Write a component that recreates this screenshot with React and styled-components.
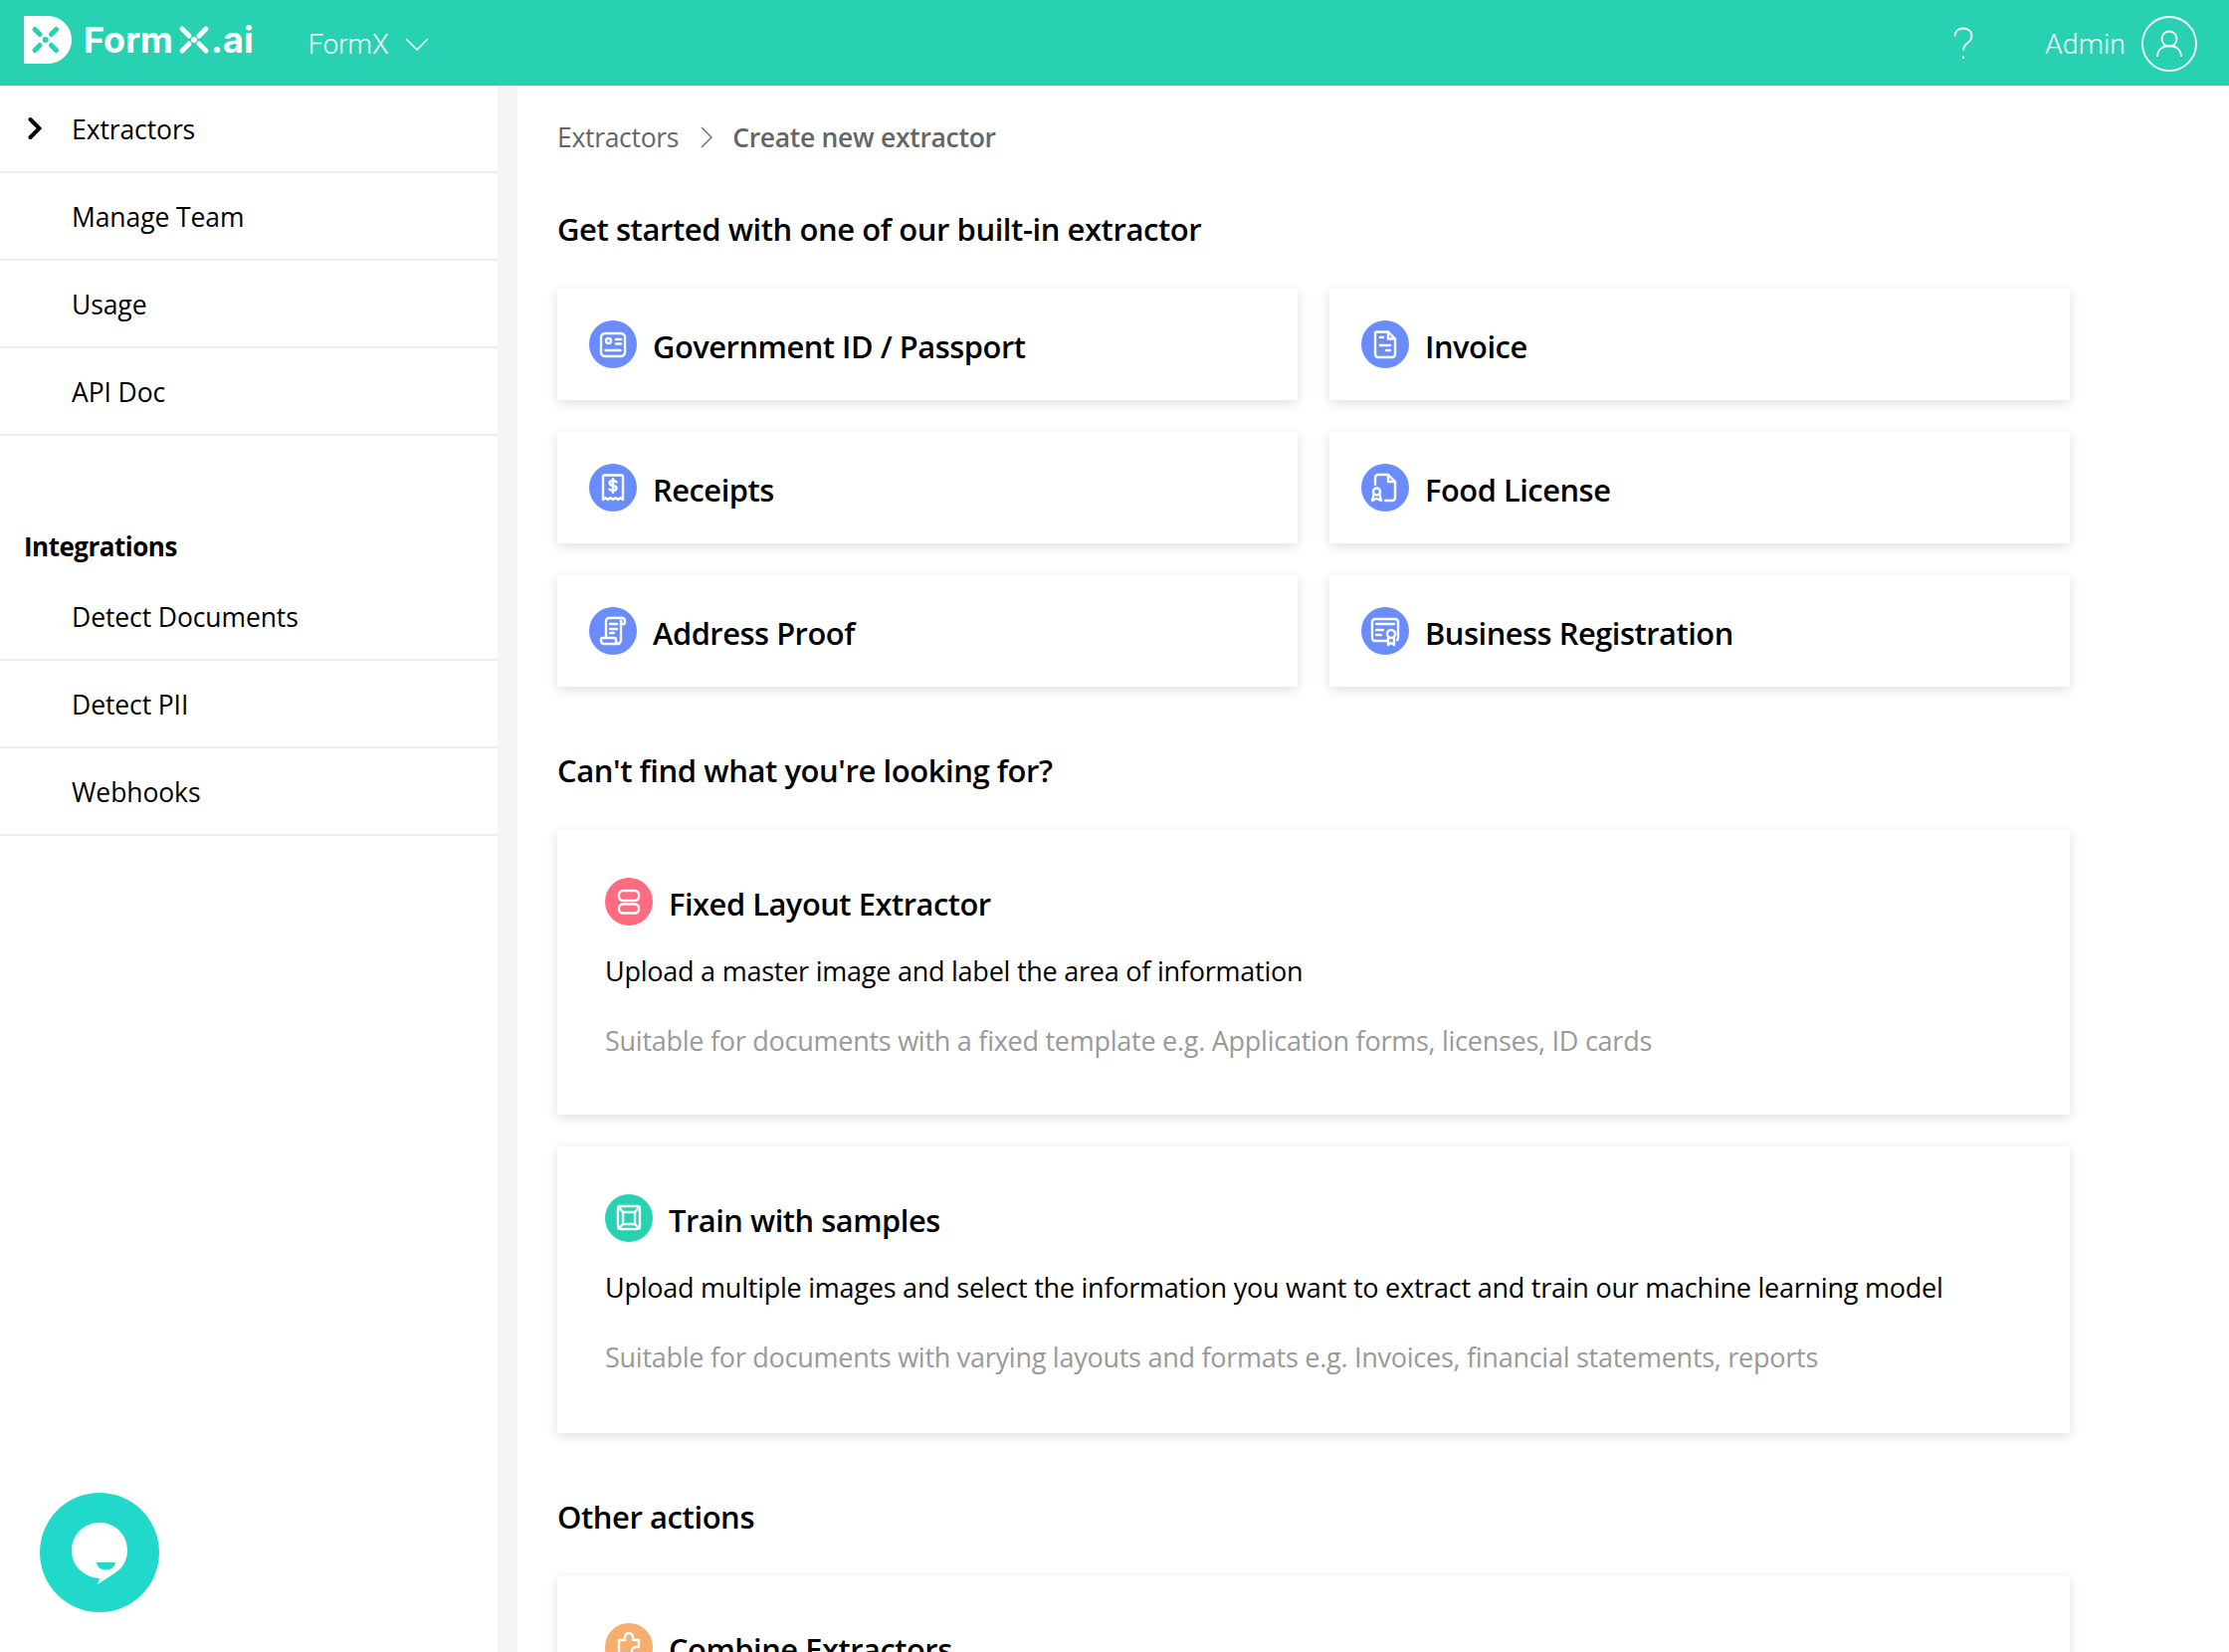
import styled, { createGlobalStyle } from "styled-components";

const GlobalStyle = createGlobalStyle`
    html, body {
        margin: 0;
        padding: 0;
        background: #fff;
    }
    body {
        font-family: "Open Sans", "Noto Sans", sans-serif;
        color: #000;
    }
    * { box-sizing: border-box; }
`

const Page = styled.div`
    width: 2240px;
    height: 1660px;
    overflow: hidden;
    position: relative;
    display: flex;
    flex-direction: column;
`

const Header = styled.header`
    height: 86px;
    flex: none;
    background: #27d1b1;
    display: flex;
    align-items: center;
    color: #fff;
    padding-left: 24px;
`

const LogoMark = styled.svg`
    width: 48px;
    height: 48px;
    flex: none;
    margin-top: -6px;
`

const LogoText = styled.div`
    display: flex;
    align-items: center;
    margin-left: 12px;
    margin-top: -6px;
    font-family: Inter, sans-serif;
    font-weight: 700;
    font-size: 36px;
    line-height: 48px;
    svg { margin: 0 1px 0 5px; }
`

const OrgSwitch = styled.div`
    display: flex;
    align-items: center;
    margin-left: 55px;
    margin-top: 3px;
    gap: 16px;
    font-family: Roboto, sans-serif;
    font-weight: 300;
    font-size: 27.5px;
    line-height: 36px;
`

const HeaderRight = styled.div`
    margin-left: auto;
    display: flex;
    align-items: center;
    padding: 2px 32px 0 0;
`

const HelpMark = styled.svg`
    margin-right: 72px;
`

const AdminName = styled.span`
    font-family: Roboto, sans-serif;
    font-weight: 300;
    font-size: 28.5px;
    line-height: 36px;
    margin: 2px 16px 0 0;
`

const Body = styled.div`
    flex: 1;
    display: flex;
    min-height: 0;
`

const Sidebar = styled.aside`
    width: 520px;
    flex: none;
    background: #fff;
    border-right: 20px solid #f5f5f5;
`

const NavRow = styled.div`
    height: 88px;
    display: flex;
    align-items: center;
    position: relative;
    padding: 2px 0 0 72px;
    border-bottom: 2px solid #eee;
    font-size: 26.5px;
    font-weight: 400;
    letter-spacing: -0.1px;
    svg {
        position: absolute;
        left: 28px;
        top: 31px;
    }
`

const NavSection = styled.div`
    margin-top: 93px;
    height: 45px;
    padding-left: 24px;
    font-size: 26px;
    line-height: 36px;
    font-weight: 700;
    letter-spacing: -0.5px;
`

const Main = styled.main`
    flex: 1;
    padding: 0 160px 0 40px;
    min-width: 0;
`

const Breadcrumb = styled.div`
    display: flex;
    align-items: center;
    height: 40px;
    margin-top: 32px;
    font-size: 26.5px;
    color: #666;
    letter-spacing: -0.3px;
    svg { margin: 0 19px 0 21px; }
    b {
        font-weight: 600;
        color: #666;
    }
`

const Heading = styled.h2`
    margin: ${(p) => p.$top}px 0 0;
    font-size: 31px;
    line-height: 44px;
    font-weight: 600;
    letter-spacing: -0.43px;
    color: #000;
`

const Grid = styled.div`
    display: grid;
    grid-template-columns: 744px 744px;
    gap: 32px;
    margin-top: 38px;
`

const Card = styled.div`
    height: 112px;
    background: #fff;
    box-shadow: 0 3px 10px rgba(0, 0, 0, 0.13);
    padding: 32px;
    display: flex;
    align-items: flex-start;
`

const Round = styled.span`
    width: 48px;
    height: 48px;
    flex: none;
    border-radius: 50%;
    background: ${(p) => p.$color};
    svg {
        display: block;
        width: 48px;
        height: 48px;
        fill: none;
        stroke: #fff;
        stroke-width: 2.4;
        stroke-linecap: round;
        stroke-linejoin: round;
    }
`

const CardName = styled.span`
    margin-left: 16px;
    margin-top: 1px;
    font-size: 30.8px;
    line-height: 50px;
    font-weight: 600;
    letter-spacing: -0.45px;
    color: #000;
`

const WideCard = styled.div`
    height: ${(p) => p.$height}px;
    margin-top: ${(p) => p.$top}px;
    background: #fff;
    box-shadow: 0 3px 10px rgba(0, 0, 0, 0.13);
    padding: 48px;
`

const WideHead = styled.div`
    display: flex;
    align-items: flex-start;
`

const Desc = styled.p`
    margin: 23px 0 0;
    font-size: 27px;
    line-height: 40px;
    letter-spacing: -0.24px;
    color: #000;
`

const Hint = styled.p`
    margin: 30px 0 0;
    font-size: 27px;
    line-height: 40px;
    letter-spacing: -0.26px;
    color: #999;
`

const ChatButton = styled.div`
    position: absolute;
    left: 40px;
    top: 1500px;
    width: 120px;
    height: 120px;
    border-radius: 50%;
    background: #20d9cb;
    svg { display: block; }
`

const idIcon = (
    <svg viewBox="0 0 48 48">
        <rect x="12" y="13" width="24" height="23" rx="4" />
        <circle cx="19.500" cy="20.500" r="2.500" />
        <path d="M27 19h5M27 23.500h5M16.500 30h15" />
    </svg>
);

const receiptIcon = (
    <svg viewBox="0 0 48 48">
        <path d="M14 36V13a1.500 1.500 0 0 1 1.500-1.500h17A1.500 1.500 0 0 1 34 13v23l-2.500-1.800-2.500 1.800-2.500-1.800-2.500 1.800-2.500-1.800-2.500 1.800-2.500-1.800z" />
        <path d="M27.500 18.500c-.5-1-1.800-1.500-3.500-1.500-2 0-3.500 1-3.500 2.500s1.500 2.200 3.500 2.500 3.500 1 3.500 2.500-1.500 2.500-3.500 2.500c-1.700 0-3-.5-3.500-1.500M24 15v14" />
    </svg>
);

const scrollIcon = (
    <svg viewBox="0 0 48 48">
        <path d="M17 31V14a3 3 0 0 1 3-3h13" />
        <path d="M33 11a3 3 0 0 1 3 3v1.500a1.500 1.500 0 0 1-1.500 1.500H32v-3" />
        <path d="M32 14v19a4 4 0 0 1-4 4H15a3 3 0 0 1-3-3v-1.500a1.500 1.500 0 0 1 1.500-1.500h12a1.500 1.500 0 0 1 1.500 1.500V34a3 3 0 0 0 3 3" />
        <path d="M21 17h7M21 22h7M21 26h4" />
    </svg>
);

const invoiceIcon = (
    <svg viewBox="0 0 48 48">
        <path d="M15 11.500h12l7 7V34a3 3 0 0 1-3 3H17a3 3 0 0 1-3-3V12.500a1 1 0 0 1 1-1z" />
        <path d="M27 11.500v7h7" />
        <path d="M19 17h3M19 25h10M25 30h4" />
    </svg>
);

const licenseIcon = (
    <svg viewBox="0 0 48 48">
        <path d="M14 21v-7a3 3 0 0 1 3-3h10l7 7v16a3 3 0 0 1-3 3h-7" />
        <path d="M27 11v7h7" />
        <circle cx="15.500" cy="28" r="3.500" />
        <path d="M12.500 31l-1.500 6 4.500-2 4.500 2-1.500-6" />
    </svg>
);

const certIcon = (
    <svg viewBox="0 0 48 48">
        <path d="M26 34H14a3 3 0 0 1-3-3V15a3 3 0 0 1 3-3h20a3 3 0 0 1 3 3v16a3 3 0 0 1-1 2.200" />
        <path d="M15 17h18M15 23h7M15 28h5" />
        <circle cx="30" cy="27" r="4" />
        <path d="M27 31v7l3-2 3 2v-7" />
    </svg>
);

const fixedIcon = (
    <svg viewBox="0 0 48 48">
        <rect x="14" y="13" width="20" height="10" rx="4" />
        <rect x="14" y="26.500" width="20" height="9" rx="4" />
    </svg>
);

const trainIcon = (
    <svg viewBox="0 0 48 48">
        <rect x="13" y="12" width="22" height="23" rx="3" />
        <rect x="18" y="18" width="12" height="12" />
        <path d="M13.500 12.500l4.500 5.500M34.500 12.500L30 18M13.500 34.500l4.500-4.500M34.500 34.500L30 30" />
    </svg>
);

const puzzleIcon = (
    <svg viewBox="0 0 48 48">
        <path d="M20 17v-3a4 4 0 0 1 8 0v3h6v7h-3a4 4 0 0 0 0 8h3v6H14V17z" />
    </svg>
);

const kinds = [
    ["Government ID / Passport", idIcon],
    ["Invoice", invoiceIcon],
    ["Receipts", receiptIcon],
    ["Food License", licenseIcon],
    ["Address Proof", scrollIcon],
    ["Business Registration", certIcon],
];

export default function App() {
    return (
        <Page>
            <GlobalStyle />
            <Header>
                <LogoMark viewBox="0 0 48 48">
                    <path d="M0 0h24a24 24 0 0 1 0 48H0z" fill="#fff" />
                    <g stroke="#27d1b1" strokeWidth="5" strokeLinecap="round">
                        <path d="M11 13.500l5 5M32.500 13.500l-5 5M11 34.500l5-5M32.500 34.500l-5-5" />
                    </g>
                    <circle cx="21.700" cy="24" r="3" fill="#27d1b1" />
                </LogoMark>
                <LogoText>
                    Form
                    <svg width="32" height="30" viewBox="0 0 32 30">
                        <path d="M4 4l7 7M28 4l-7 7M4 26l7-7M28 26l-7-7" stroke="#fff" strokeWidth="5" strokeLinecap="round" />
                        <circle cx="16" cy="15" r="3" fill="#fff" />
                    </svg>
                    .ai
                </LogoText>
                <OrgSwitch>
                    FormX
                    <svg width="24" height="14" viewBox="0 0 24 14" fill="none" stroke="#fff" strokeWidth="1.500">
                        <path d="M1 1l11 11L23 1" />
                    </svg>
                </OrgSwitch>
                <HeaderRight>
                    <HelpMark width="20" height="34" viewBox="0 0 20 34" fill="none" stroke="#fff" strokeWidth="1.800">
                        <path d="M1.500 9.500C1.500 4.500 5 1.500 10 1.500s8.500 3 8.500 7.500c0 3.500-2 5.500-4.500 7.500-2.500 2-4 3.500-4 7" />
                        <path d="M10 29.500v2.500" strokeWidth="2" />
                    </HelpMark>
                    <AdminName>Admin</AdminName>
                    <svg width="56" height="56" viewBox="0 0 56 56" fill="none" stroke="#fff" strokeWidth="1.800">
                        <circle cx="28" cy="28" r="27" />
                        <circle cx="28" cy="23" r="7.500" />
                        <path d="M16 41c0-7 5-11 12-11s12 4 12 11" />
                    </svg>
                </HeaderRight>
            </Header>
            <Body>
                <Sidebar>
                    <NavRow>
                        <svg width="14" height="24" viewBox="0 0 14 24" fill="none" stroke="#000" strokeWidth="4" strokeLinecap="round">
                            <path d="M2.500 3l9 9-9 9" />
                        </svg>
                        Extractors
                    </NavRow>
                    <NavRow>Manage Team</NavRow>
                    <NavRow>Usage</NavRow>
                    <NavRow>API Doc</NavRow>
                    <NavSection>Integrations</NavSection>
                    <NavRow>Detect Documents</NavRow>
                    <NavRow>Detect PII</NavRow>
                    <NavRow>Webhooks</NavRow>
                </Sidebar>
                <Main>
                    <Breadcrumb>
                        Extractors
                        <svg width="14" height="24" viewBox="0 0 14 24" fill="none" stroke="#777" strokeWidth="1.500">
                            <path d="M2 2l10 10L2 22" />
                        </svg>
                        <b>Create new extractor</b>
                    </Breadcrumb>
                    <Heading $top={50}>Get started with one of our built-in extractor</Heading>
                    <Grid>
                        {kinds.map(([name, icon]) => (
                            <Card key={name}>
                                <Round $color="#6a8cff">{icon}</Round>
                                <CardName>{name}</CardName>
                            </Card>
                        ))}
                    </Grid>
                    <Heading $top={62}>Can't find what you're looking for?</Heading>
                    <WideCard $height={286} $top={38}>
                        <WideHead>
                            <Round $color="#ff6b7f">{fixedIcon}</Round>
                            <CardName>Fixed Layout Extractor</CardName>
                        </WideHead>
                        <Desc>Upload a master image and label the area of information</Desc>
                        <Hint>Suitable for documents with a fixed template e.g. Application forms, licenses, ID cards</Hint>
                    </WideCard>
                    <WideCard $height={288} $top={32}>
                        <WideHead>
                            <Round $color="#27d1b1">{trainIcon}</Round>
                            <CardName>Train with samples</CardName>
                        </WideHead>
                        <Desc>Upload multiple images and select the information you want to extract and train our machine learning model</Desc>
                        <Hint>Suitable for documents with varying layouts and formats e.g. Invoices, financial statements, reports</Hint>
                    </WideCard>
                    <Heading $top={62}>Other actions</Heading>
                    <WideCard $height={286} $top={37}>
                        <WideHead>
                            <Round $color="#f6ae6e">{puzzleIcon}</Round>
                            <CardName>Combine Extractors</CardName>
                        </WideHead>
                    </WideCard>
                </Main>
            </Body>
            <ChatButton>
                <svg width="120" height="120" viewBox="0 0 120 120">
                    <path d="M60 30c16 0 28 12 28 28 0 10-5 18-13 23l-17 11 2-6c-15-1-28-12-28-28 0-16 12-28 28-28z" fill="#fff" />
                    <path d="M57 70h19a9.500 7.500 0 0 1-19 0z" fill="#20d9cb" />
                </svg>
            </ChatButton>
        </Page>
    );
}
